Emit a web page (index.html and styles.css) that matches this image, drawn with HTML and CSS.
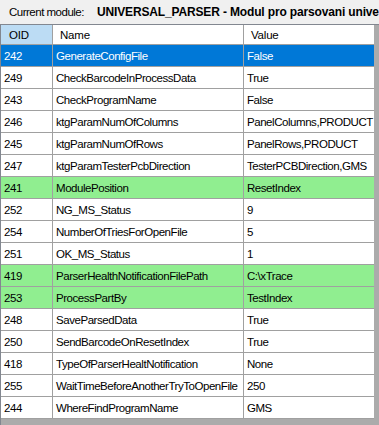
FILE: index.html
```html
<!DOCTYPE html>
<html>
<head>
<meta charset="utf-8">
<link rel="stylesheet" href="styles.css">
</head>
<body>
<div class="window">
  <div class="titlebar">
    <span class="label">Current module:</span>
    <span class="module">UNIVERSAL_PARSER - Modul pro parsovani univerzalnich dat</span>
  </div>
  <div class="gridview">
    <div class="grid">
      <div class="row header">
        <div class="cell c1 sel-col">OID</div>
        <div class="cell c2">Name</div>
        <div class="cell c3">Value</div>
      </div>
      <div class="row selected"><div class="cell c1">242</div><div class="cell c2">GenerateConfigFile</div><div class="cell c3">False</div></div>
      <div class="row"><div class="cell c1">249</div><div class="cell c2">CheckBarcodeInProcessData</div><div class="cell c3">True</div></div>
      <div class="row"><div class="cell c1">243</div><div class="cell c2">CheckProgramName</div><div class="cell c3">False</div></div>
      <div class="row"><div class="cell c1">246</div><div class="cell c2">ktgParamNumOfColumns</div><div class="cell c3">PanelColumns,PRODUCT</div></div>
      <div class="row"><div class="cell c1">245</div><div class="cell c2">ktgParamNumOfRows</div><div class="cell c3">PanelRows,PRODUCT</div></div>
      <div class="row"><div class="cell c1">247</div><div class="cell c2">ktgParamTesterPcbDirection</div><div class="cell c3">TesterPCBDirection,GMS</div></div>
      <div class="row green"><div class="cell c1">241</div><div class="cell c2">ModulePosition</div><div class="cell c3">ResetIndex</div></div>
      <div class="row"><div class="cell c1">252</div><div class="cell c2">NG_MS_Status</div><div class="cell c3">9</div></div>
      <div class="row"><div class="cell c1">254</div><div class="cell c2">NumberOfTriesForOpenFile</div><div class="cell c3">5</div></div>
      <div class="row"><div class="cell c1">251</div><div class="cell c2">OK_MS_Status</div><div class="cell c3">1</div></div>
      <div class="row green"><div class="cell c1">419</div><div class="cell c2">ParserHealthNotificationFilePath</div><div class="cell c3">C:\xTrace</div></div>
      <div class="row green"><div class="cell c1">253</div><div class="cell c2">ProcessPartBy</div><div class="cell c3">TestIndex</div></div>
      <div class="row"><div class="cell c1">248</div><div class="cell c2">SaveParsedData</div><div class="cell c3">True</div></div>
      <div class="row"><div class="cell c1">250</div><div class="cell c2">SendBarcodeOnResetIndex</div><div class="cell c3">True</div></div>
      <div class="row"><div class="cell c1">418</div><div class="cell c2">TypeOfParserHealtNotification</div><div class="cell c3">None</div></div>
      <div class="row"><div class="cell c1">255</div><div class="cell c2">WaitTimeBeforeAnotherTryToOpenFile</div><div class="cell c3">250</div></div>
      <div class="row"><div class="cell c1">244</div><div class="cell c2">WhereFindProgramName</div><div class="cell c3">GMS</div></div>
    </div>
  </div>
</div>
</body>
</html>
```
FILE: styles.css
```css
html, body {
  margin: 0;
  padding: 0;
  background: #f0f0f0;
}
.window {
  width: 379px;
  height: 425px;
  overflow: hidden;
  display: flex;
  flex-direction: column;
  font-family: "Liberation Sans", Arial, sans-serif;
  color: #000;
}
.titlebar {
  height: 24px;
  flex: none;
  display: flex;
  align-items: center;
  white-space: nowrap;
  overflow: hidden;
  background: #f0f0f0;
  padding-left: 9px;
  box-sizing: border-box;
}
.label {
  font-size: 11.5px;
  letter-spacing: -0.5px;
  width: 88px;
  flex: none;
}
.module {
  font-size: 12px;
  font-weight: bold;
  letter-spacing: -0.15px;
}
.gridview {
  flex: 1;
  background: #ababab;
  border-top: 1px solid #828790;
  border-left: 1px solid #828790;
  display: flex;
  align-items: flex-start;
}
.grid {
  width: 373px;
  background: #fff;
  display: flex;
  flex-direction: column;
}
.row {
  display: flex;
  height: 21px;
  border-bottom: 1px solid #a0a0a0;
  font-size: 11.5px;
  letter-spacing: -0.45px;
}
.row.header {
  height: 19px;
}
.cell {
  display: flex;
  align-items: center;
  padding-left: 3px;
  white-space: nowrap;
  overflow: hidden;
  box-sizing: border-box;
}
.c1 {
  width: 52px;
  border-right: 1px solid #a0a0a0;
}
.c2 {
  width: 191px;
  border-right: 1px solid #a0a0a0;
}
.c3 {
  width: 130px;
}
.header .cell {
  padding-left: 7px;
  letter-spacing: -0.2px;
}
.header .c1 {
  padding-left: 8px;
}
.header .sel-col {
  background: #bcdcf4;
}
.selected {
  background: #0078d7;
  color: #fff;
}
.green {
  background: #90ee90;
}
```
